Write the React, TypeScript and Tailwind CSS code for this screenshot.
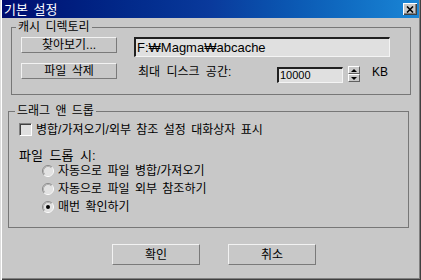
import React from "react";

const F = "font-['Liberation_Sans','Noto_Sans_CJK_KR',sans-serif]";

function Btn({ w, h, label }: { w: string; h: string; label: string }) {
  return (
    <div
      className={`${w} ${h} flex items-center justify-center border border-t-[#f2f2f2] border-l-[#f2f2f2] border-r-[#7a7a7a] border-b-[#7a7a7a] text-[12px] leading-none text-black [word-spacing:2px]`}
    >
      {label}
    </div>
  );
}

function Radio({ checked }: { checked?: boolean }) {
  return (
    <svg width="12" height="12" viewBox="0 0 12 12" className="shrink-0">
      <circle cx="6" cy="6" r="5" fill="#e2e2e2" />
      <path d="M2.11 9.89 A5.5 5.5 0 0 1 9.89 2.11" fill="none" stroke="#8a8a8a" strokeWidth="1" />
      <path d="M9.89 2.11 A5.5 5.5 0 0 1 2.11 9.89" fill="none" stroke="#ffffff" strokeWidth="1" />
      <path d="M2.82 9.18 A4.5 4.5 0 0 1 9.18 2.82" fill="none" stroke="#b0b0b0" strokeWidth="1" />
      {checked && <circle cx="6" cy="6" r="2" fill="#000" />}
    </svg>
  );
}

export default function App() {
  return (
    <div
      className={`w-[421px] h-[280px] bg-[#c8c8c8] flex flex-col px-[2px] shadow-[inset_1px_0_0_#dcdcdc,inset_2px_0_0_#ffffff,inset_-1px_-1px_0_#404040,inset_-2px_-2px_0_#808080] ${F} text-black overflow-hidden`}
    >
      {/* title bar */}
      <div className="h-[18px] flex items-center justify-between pl-[2px] pr-[2px] bg-gradient-to-r from-[#000c70] via-[#0a3a9c] to-[#1a86d6]">
        <span className="text-white text-[13px] leading-none [word-spacing:2px]">기본 설정</span>
        <div className="w-[14px] h-[12px] bg-[#c8c8c8] flex items-center justify-center shadow-[inset_1px_1px_0_#ffffff,inset_-1px_-1px_0_#404040,inset_-2px_-2px_0_#808080]">
          <svg width="8" height="7" viewBox="0 0 8 7">
            <path d="M1 0.5 L7 6.5 M7 0.5 L1 6.5" stroke="#000" strokeWidth="1.6" />
          </svg>
        </div>
      </div>

      {/* group 1 */}
      <fieldset className="ml-[9px] mt-[2px] w-[400px] border border-[#777777] pb-[11px]">
        <legend className="ml-[4px] px-[2px] text-[12px] leading-[14px] [word-spacing:2px]">캐시 디렉토리</legend>
        <div className="pl-[9px] pt-[3px] flex flex-col">
          <div className="flex items-start">
            <Btn w="w-[96px]" h="h-[16px]" label="찾아보기..." />
            <div className="ml-[17px] w-[256px] h-[20px] bg-[#e0e0e0] border-t-2 border-l-2 border-t-[#202020] border-l-[#202020] border-b border-r border-b-[#f4f4f4] border-r-[#f4f4f4] flex items-center pl-[1px] text-[13px] leading-none">
              F:₩Magma₩abcache
            </div>
          </div>
          <div className="flex items-start mt-[6px]">
            <Btn w="w-[96px]" h="h-[16px]" label="파일 삭제" />
            <div className="ml-[21px] w-[139px] mt-[2px] text-[12px] leading-[14px] [word-spacing:3px]">최대 디스크 공간:</div>
            <div className="mt-[4px] w-[66px] h-[16px] bg-[#e0e0e0] border-t-2 border-l-2 border-t-[#202020] border-l-[#202020] border-b border-r border-b-[#f4f4f4] border-r-[#f4f4f4] flex items-center pl-[1px] text-[11px] leading-none">
              10000
            </div>
            <div className="ml-[5px] mt-[3px] w-[12px] h-[16px] flex flex-col">
              <div className="h-[8px] flex items-center justify-center border border-t-white border-l-white border-r-[#606060] border-b-[#606060]">
                <svg width="6" height="3" viewBox="0 0 6 3"><path d="M3 0 L6 3 L0 3 Z" fill="#000" /></svg>
              </div>
              <div className="h-[8px] flex items-center justify-center border border-t-white border-l-white border-r-[#606060] border-b-[#606060]">
                <svg width="6" height="3" viewBox="0 0 6 3"><path d="M0 0 L6 0 L3 3 Z" fill="#000" /></svg>
              </div>
            </div>
            <div className="ml-[12px] mt-[2px] text-[12px] leading-[14px]">KB</div>
          </div>
        </div>
      </fieldset>

      {/* group 2 */}
      <fieldset className="ml-[6px] mt-[9px] w-[401px] border border-[#777777] pb-[13px]">
        <legend className="ml-[6px] px-[2px] text-[12px] leading-[14px] [word-spacing:2px]">드래그 앤 드롭</legend>
        <div className="pl-[10px] flex flex-col">
          <div className="mt-[5px] h-[13px] flex items-center">
            <div className="w-[13px] h-[13px] bg-[#e0e0e0] border-t border-l border-t-[#808080] border-l-[#808080] border-b border-r border-b-white border-r-white shadow-[inset_1px_1px_0_#404040]" />
            <span className="ml-[4px] text-[12px] leading-none [word-spacing:2px]">병합/가져오기/외부 참조 설정 대화상자 표시</span>
          </div>
          <div className="mt-[14px] h-[11px] text-[13px] leading-[11px] [word-spacing:3px]">파일 드롭 시:</div>
          <div className="mt-[3px] flex flex-col gap-[4px] pl-[23px]">
            <div className="h-[14px] flex items-center">
              <Radio />
              <span className="ml-[4px] text-[12px] leading-none [word-spacing:2px]">자동으로 파일 병합/가져오기</span>
            </div>
            <div className="h-[14px] flex items-center">
              <Radio />
              <span className="ml-[4px] text-[12px] leading-none [word-spacing:2px]">자동으로 파일 외부 참조하기</span>
            </div>
            <div className="h-[14px] flex items-center">
              <Radio checked />
              <span className="ml-[4px] text-[12px] leading-none [word-spacing:2px]">매번 확인하기</span>
            </div>
          </div>
        </div>
      </fieldset>

      {/* buttons */}
      <div className="mt-[16px] ml-[110px] flex gap-[28px]">
        <Btn w="w-[88px]" h="h-[21px]" label="확인" />
        <Btn w="w-[88px]" h="h-[21px]" label="취소" />
      </div>
    </div>
  );
}
